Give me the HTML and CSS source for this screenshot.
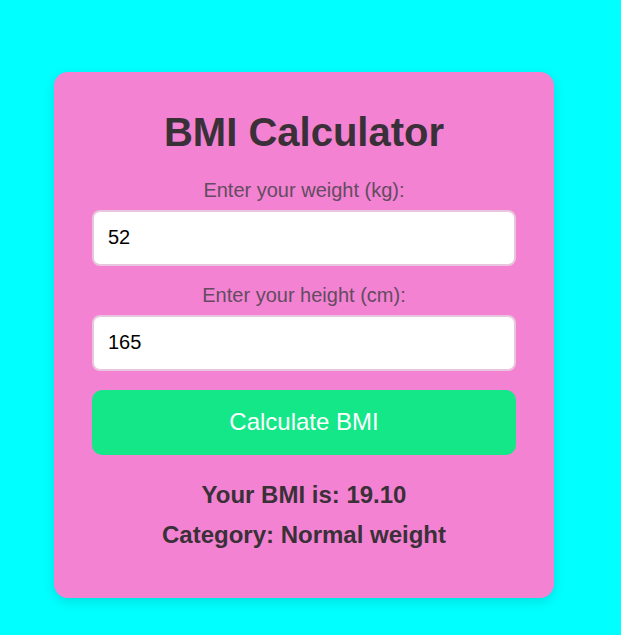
FILE: index.html
```html
<!DOCTYPE html>
<html lang="en">
<head>
<meta charset="utf-8">
<title>BMI Calculator</title>
<link rel="stylesheet" href="styles.css">
</head>
<body>
  <div class="card">
    <h1 class="title">BMI Calculator</h1>
    <label class="label" for="weight">Enter your weight (kg):</label>
    <input class="field" id="weight" type="text" value="52">
    <label class="label" for="height">Enter your height (cm):</label>
    <input class="field" id="height" type="text" value="165">
    <button class="btn" type="button">Calculate BMI</button>
    <div class="result">
      <p class="result-line">Your BMI is: 19.10</p>
      <p class="result-line">Category: Normal weight</p>
    </div>
  </div>
</body>
</html>
```

FILE: styles.css
```css
html, body {
  margin: 0;
  padding: 0;
}
body {
  background: #00ffff;
  font-family: "Liberation Sans", Arial, sans-serif;
  min-height: 635px;
}
.card {
  box-sizing: border-box;
  width: 500px;
  margin: 72px 0 0 54px;
  padding: 37px 38px 50px;
  background: #f383d2;
  border-radius: 14px;
  box-shadow: 0 4px 12px rgba(0, 0, 0, 0.12);
  display: flex;
  flex-direction: column;
  text-align: center;
}
.title {
  margin: 0 0 24px;
  font-size: 40px;
  line-height: 46px;
  font-weight: bold;
  color: #3a3038;
}
.label {
  display: block;
  font-size: 20px;
  line-height: 23px;
  color: #634b61;
  margin-bottom: 7.5px;
}
.field {
  box-sizing: border-box;
  width: 100%;
  height: 56px;
  margin: 0 0 18.5px;
  padding: 0 14px;
  border: 2px solid #e8c6de;
  border-radius: 8px;
  background: #ffffff;
  font-family: "Liberation Sans", Arial, sans-serif;
  font-size: 20px;
  color: #000000;
  outline: none;
}
.btn {
  box-sizing: border-box;
  width: 100%;
  height: 65px;
  margin-top: 0.5px;
  border: none;
  border-radius: 10px;
  background: #14e788;
  color: #ffffff;
  font-family: "Liberation Sans", Arial, sans-serif;
  font-size: 24px;
  cursor: pointer;
}
.result {
  margin-top: 26px;
}
.result-line {
  margin: 0;
  font-size: 24px;
  line-height: 27px;
  font-weight: bold;
  color: #3a3038;
}
.result-line + .result-line {
  margin-top: 13px;
}
```
